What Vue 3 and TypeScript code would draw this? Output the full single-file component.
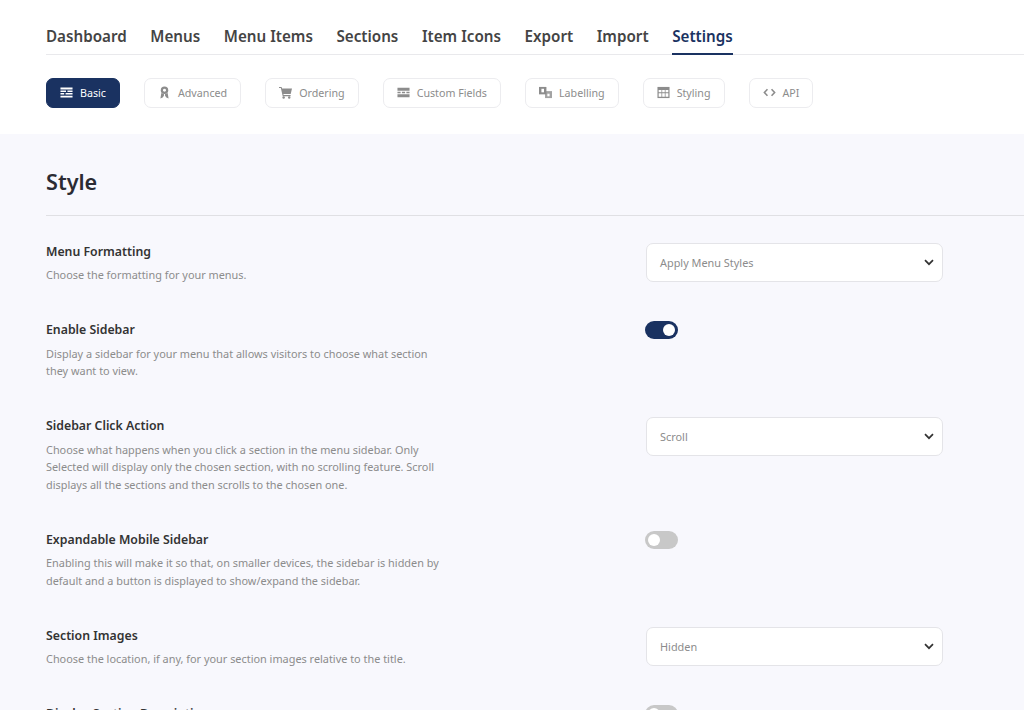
<template>
  <div class="page">
    <header class="top">
      <nav class="nav">
        <a v-for="item in navItems" :key="item" :class="['nav-link', { active: item === 'Settings' }]">{{ item }}</a>
      </nav>
      <div class="tabs">
        <button v-for="tab in tabs" :key="tab.label" :class="['tab', { active: tab.label === 'Basic' }]">
          <svg class="tab-icon" viewBox="0 0 14 14" v-html="tab.icon"></svg>
          <span>{{ tab.label }}</span>
        </button>
      </div>
    </header>

    <main class="content">
      <h1 class="title">Style</h1>
      <div class="rows">
        <div v-for="row in rows" :key="row.title" class="row">
          <div class="info">
            <h3 class="row-title">{{ row.title }}</h3>
            <p class="row-desc">{{ row.desc }}</p>
          </div>
          <div class="control">
            <div v-if="row.select" class="select">
              <span>{{ row.select }}</span>
              <svg class="chevron" viewBox="0 0 10 7">
                <path d="M1 1.2 5 5.2 9 1.2" fill="none" stroke="#333" stroke-width="1.7" />
              </svg>
            </div>
            <div v-else :class="['toggle', { on: row.on }]"><i class="knob"></i></div>
          </div>
        </div>
      </div>
    </main>
  </div>
</template>

<script setup lang="ts">
interface Row {
  title: string;
  desc: string;
  select?: string;
  on?: boolean;
}

const navItems = ["Dashboard", "Menus", "Menu Items", "Sections", "Item Icons", "Export", "Import", "Settings"];

const tabs = [
  {
    label: "Basic",
    icon: '<path fill="currentColor" d="M0.5 1.5h13v2.2H0.5zM0.5 4.8h6v1.6h-6zM8 4.8h5.5v1.6H8zM0.5 7.6h4v1.6h-4zM6 7.6h7.5v1.6H6zM0.5 10.4h13v2.1H0.5z"/>',
  },
  {
    label: "Advanced",
    icon: '<circle cx="7" cy="4.6" r="4" fill="currentColor"/><path fill="currentColor" d="M3.6 7.5 2.6 13.5l2.4-1 1.4-2V8.5zM10.4 7.5l1 6-2.4-1-1.4-2V8.5z"/><circle cx="7" cy="4.6" r="1.6" fill="#fff"/>',
  },
  {
    label: "Ordering",
    icon: '<path fill="currentColor" d="M0 1h2.8l.5 1.6H14l-1.4 6H4.7l.3 1.2h7.5V11H4L2 2.2H0z"/><circle cx="5" cy="12.4" r="1.3" fill="currentColor"/><circle cx="11" cy="12.4" r="1.3" fill="currentColor"/>',
  },
  {
    label: "Custom Fields",
    icon: '<path fill="currentColor" d="M0.5 1.8h13v3.4h-13zM0.5 6.2h3.4v1.6H0.5zM5.3 6.2h3.4v1.6H5.3zM10.1 6.2h3.4v1.6h-3.4zM0.5 8.8h13v3.4h-13z"/>',
  },
  {
    label: "Labelling",
    icon: '<path fill="currentColor" d="M0 1h8v8H0z"/><path fill="#fff" d="M2.6 3h2.8v3.8H2.6z"/><path fill="currentColor" d="M6.5 5.5H14V13H6.5z" opacity=".8"/><path fill="#fff" d="M9 8.3h2.4v2.8H9z"/>',
  },
  {
    label: "Styling",
    icon: '<path fill="currentColor" d="M0.5 1h13v12h-13z"/><path fill="#fff" d="M1.8 4.4h3v2.4h-3zM5.6 4.4h2.8v2.4H5.6zM9.2 4.4h3v2.4h-3zM1.8 7.8h3v3.8h-3zM5.6 7.8h2.8v3.8H5.6zM9.2 7.8h3v3.8h-3z"/>',
  },
  {
    label: "API",
    icon: '<path fill="none" stroke="currentColor" stroke-width="1.7" d="M4.8 3.5 1.5 7l3.3 3.5M9.2 3.5 12.5 7l-3.3 3.5"/>',
  },
];

const rows: Row[] = [
  { title: "Menu Formatting", desc: "Choose the formatting for your menus.", select: "Apply Menu Styles" },
  {
    title: "Enable Sidebar",
    desc: "Display a sidebar for your menu that allows visitors to choose what section they want to view.",
    on: true,
  },
  {
    title: "Sidebar Click Action",
    desc: "Choose what happens when you click a section in the menu sidebar. Only Selected will display only the chosen section, with no scrolling feature. Scroll displays all the sections and then scrolls to the chosen one.",
    select: "Scroll",
  },
  {
    title: "Expandable Mobile Sidebar",
    desc: "Enabling this will make it so that, on smaller devices, the sidebar is hidden by default and a button is displayed to show/expand the sidebar.",
    on: false,
  },
  {
    title: "Section Images",
    desc: "Choose the location, if any, for your section images relative to the title.",
    select: "Hidden",
  },
  { title: "Display Section Description", desc: "", on: false },
];
</script>

<style>
html,
body {
  margin: 0;
  height: 100%;
  overflow: hidden;
  background: #f8f8fd;
}
</style>

<style scoped>
.page {
  height: 710px;
  overflow: hidden;
  font-family: "Noto Sans", "Open Sans", sans-serif;
  background: #f8f8fd;
}
.top {
  height: 134px;
  box-sizing: border-box;
  padding: 20px 0 0 46px;
  background: #fff;
}
.nav {
  display: flex;
  gap: 23.6px;
  height: 34px;
  border-bottom: 1px solid #e9e9ec;
}
.nav-link {
  height: 35px;
  box-sizing: border-box;
  font-size: 15.2px;
  line-height: 33px;
  font-weight: 600;
  color: #444;
}
.nav-link.active {
  color: #1a3261;
  border-bottom: 2px solid #1a3261;
}
.tabs {
  display: flex;
  gap: 24px;
  margin-top: 23px;
}
.tab {
  display: flex;
  align-items: center;
  gap: 7px;
  height: 30px;
  box-sizing: border-box;
  padding: 0 13px 1px;
  font-family: inherit;
  font-size: 10.7px;
  color: #8c8c8c;
  background: #fff;
  border: 1px solid #ececef;
  border-radius: 7px;
}
.tab.active {
  color: #fff;
  background: #1a3261;
  border-color: #1a3261;
}
.tab-icon {
  width: 13px;
  height: 13px;
}
.content {
  padding: 31px 0 0 46px;
}
.title {
  margin: 0;
  padding-bottom: 17px;
  font-size: 21.6px;
  line-height: 33px;
  font-weight: 600;
  color: #2b2b33;
  border-bottom: 1px solid #e0e0e4;
}
.rows {
  padding-top: 26.6px;
}
.row {
  display: flex;
  justify-content: space-between;
  width: 897px;
  padding-bottom: 37.5px;
}
.info {
  width: 396px;
}
.row-title {
  margin: 0 0 5.5px;
  font-size: 12.3px;
  line-height: 18px;
  font-weight: 600;
  color: #333;
}
.row-desc {
  margin: 0;
  font-size: 10.9px;
  line-height: 17.5px;
  color: #8c8c8c;
}
.control {
  width: 297px;
}
.select {
  display: flex;
  align-items: center;
  justify-content: space-between;
  height: 39px;
  box-sizing: border-box;
  padding: 0 8px 0 13px;
  font-size: 10.9px;
  color: #8c8c8c;
  background: #fff;
  border: 1px solid #e4e4e8;
  border-radius: 7px;
}
.chevron {
  width: 10px;
  height: 7px;
}
.toggle {
  display: flex;
  align-items: center;
  width: 33px;
  height: 18px;
  padding: 0 3px;
  box-sizing: border-box;
  background: #c8c8c8;
  border-radius: 9px;
  margin-left: -1px;
}
.toggle.on {
  justify-content: flex-end;
  background: #1a3261;
}
.knob {
  width: 12px;
  height: 12px;
  background: #fff;
  border-radius: 50%;
}
</style>
